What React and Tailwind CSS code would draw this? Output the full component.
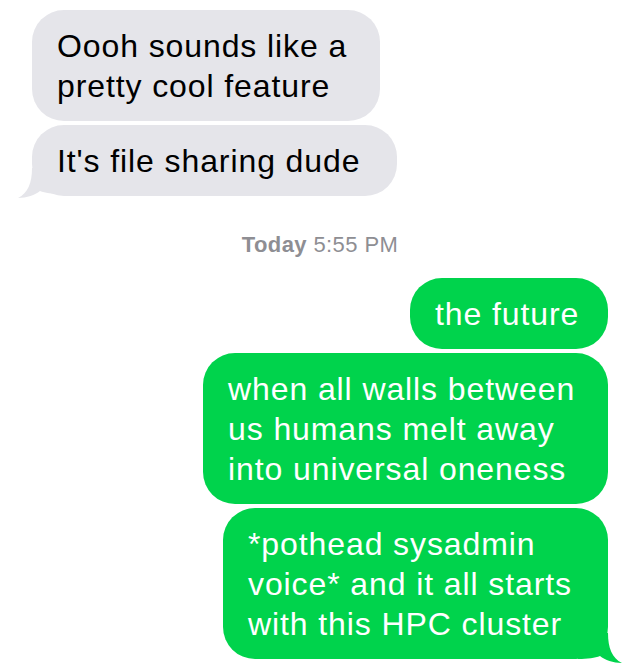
import React from 'react';

const font = "font-['Helvetica_Neue','Liberation_Sans',Arial,sans-serif]";

const Tail = ({ color, flip, drop }) => (
    <svg
        width="44"
        height="30"
        viewBox="0 0 44 30"
        className={`absolute ${drop} ${flip ? '-right-[14px] -scale-x-100' : '-left-[14px]'}`}
    >
        <path d="M14 0 C14 15 10 25 0 30 C9 30 17 27 22 23 C27 25 34 26 44 26 L44 0 Z" fill={color} />
    </svg>
);

const Received = ({ width, tail, children }) => (
    <div className={`relative ${width} rounded-[32px] bg-[#e5e5ea] pl-[25px] pt-[16px] pb-[15px] text-[32px] leading-[40px] tracking-[0.9px] text-black`}>
        {tail && <Tail color="#e5e5ea" drop="-bottom-[2px]" />}
        <span className="relative">{children}</span>
    </div>
);

const Sent = ({ width, tail, children }) => (
    <div className={`relative ${width} rounded-[32px] bg-[#00d34c] pl-[25px] pt-[16px] pb-[15px] text-[32px] leading-[40px] tracking-[0.9px] text-white`}>
        {tail && <Tail color="#00d34c" flip drop="-bottom-[4px]" />}
        <span className="relative">{children}</span>
    </div>
);

export default function App() {
    return (
        <div className={`${font} w-[640px] h-[663px] bg-white overflow-hidden px-[32px] pt-[10px]`}>
            {/* received */}
            <div className="flex flex-col items-start gap-[4px]">
                <Received width="w-[348px]">Oooh sounds like a<br />pretty cool feature</Received>
                <Received width="w-[365px]" tail>It's file sharing dude</Received>
            </div>

            {/* timestamp */}
            <div className="mt-[37px] text-center text-[22px] leading-[24px] tracking-[0.4px] text-[#8e8e93]">
                <span className="font-bold">Today</span> 5:55 PM
            </div>

            {/* sent */}
            <div className="mt-[21px] flex flex-col items-end gap-[4px]">
                <Sent width="w-[198px]">the future</Sent>
                <Sent width="w-[405px]">when all walls between<br />us humans melt away<br />into universal oneness</Sent>
                <Sent width="w-[385px]" tail>*pothead sysadmin<br />voice* and it all starts<br />with this HPC cluster</Sent>
            </div>
        </div>
    );
}
